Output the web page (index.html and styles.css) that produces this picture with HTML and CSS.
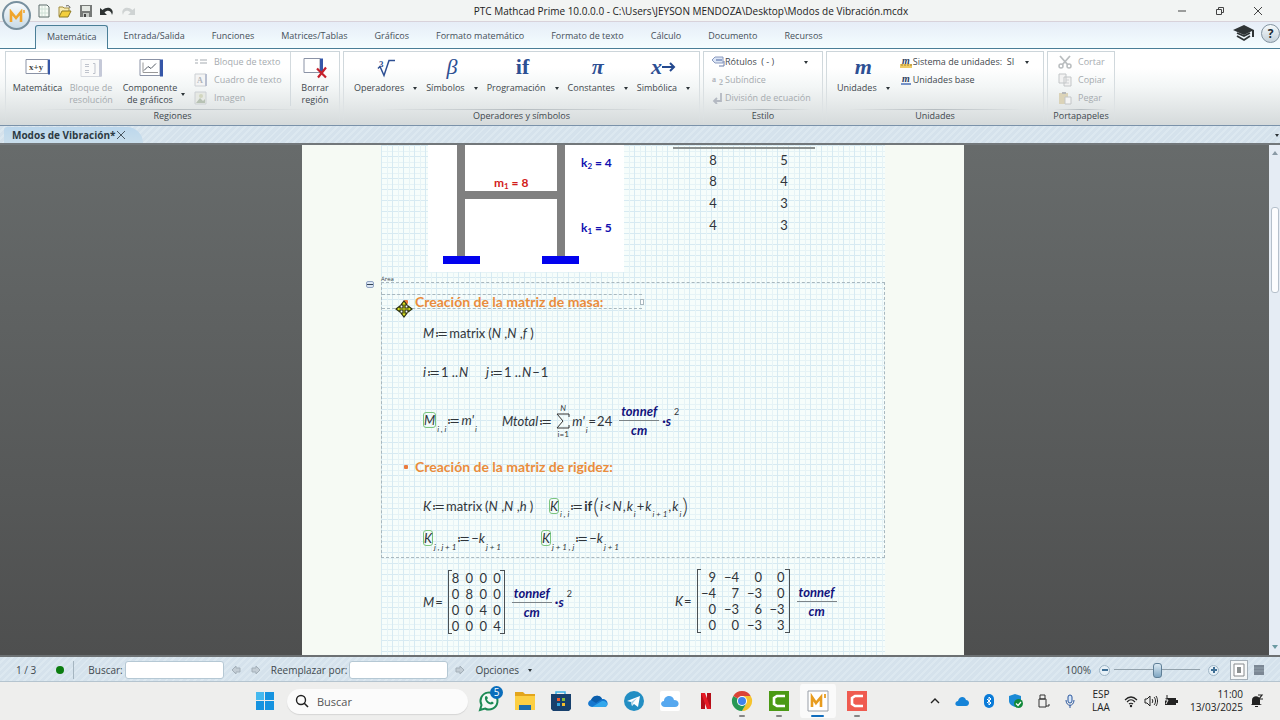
FILE: index.html
```html
<!DOCTYPE html>
<html lang="es">
<head>
  <meta charset="UTF-8" />
  <meta name="viewport" content="width=device-width, initial-scale=1" />
  <title>PTC Mathcad Prime 10.0.0.0</title>
  <link rel="stylesheet" href="styles.css">
</head>
<body>
  <header class="titlebar">
    <button class="orb" aria-label="Menú de Mathcad">
      <svg viewBox="0 0 18 14" width="18" height="14"><path d="M3 13V3l5 6 5-6v10" fill="none" stroke="#f0a52c" stroke-width="2.6"/><path d="M16 1v3" stroke="#f0a52c" stroke-width="1.6"/></svg>
    </button>
    <div class="quick">
      <button aria-label="Nuevo"><svg viewBox="0 0 14 14" width="14" height="14"><path d="M2 1h8l2 2v10H2z" fill="#f7fbf6" stroke="#5c6c6a"/><path d="M5 2v10M8 2v10M3 5h8M3 9h8" stroke="#cfe0d6"/></svg></button>
      <button aria-label="Abrir"><svg viewBox="0 0 14 14" width="14" height="14"><path d="M1 12V3h4l1 1h5v3" fill="#f8ecb0" stroke="#a18b3c"/><path d="M1 13l3-6h9l-3 6z" fill="#f3cf3d" stroke="#8d7a24"/><path d="M8 2c2-1 4 0 4 2" fill="none" stroke="#555"/></svg></button>
      <button aria-label="Guardar"><svg viewBox="0 0 14 14" width="14" height="14"><path d="M1 1h12v12H1z" fill="#777a78"/><path d="M3 2h8v5H3z" fill="#e4e8e3"/><path d="M4 9h6v4H4z" fill="#c5c9c5"/><path d="M5 10h2v3H5z" fill="#444"/></svg></button>
      <button aria-label="Deshacer"><svg viewBox="0 0 14 14" width="14" height="14"><path d="M0 4v7h7L4.500 8.500C7 6 11 6 12 11c3-6-4-10-9.500-5z" fill="#2d3232"/></svg></button>
      <button aria-label="Rehacer"><svg viewBox="0 0 14 14" width="14" height="14"><path d="M14 4v7H7l2.500-2.500C7 6 3 6 2 11c-3-6 4-10 9.500-5z" fill="#cfd3d3"/></svg></button>
    </div>
    <h1 class="title">PTC Mathcad Prime 10.0.0.0 - C:\Users\JEYSON MENDOZA\Desktop\Modos de Vibración.mcdx</h1>
    <div class="window-buttons">
      <button aria-label="Minimizar"><svg viewBox="0 0 10 10" width="10" height="10"><path d="M1 5h8"/></svg></button>
      <button aria-label="Restaurar"><svg viewBox="0 0 10 10" width="10" height="10"><path d="M1.500 3.500h5v5h-5zM3.500 3V1.500h5v5H7"/></svg></button>
      <button aria-label="Cerrar"><svg viewBox="0 0 10 10" width="10" height="10"><path d="M1 1l8 8M9 1L1 9"/></svg></button>
    </div>
  </header>

  <nav class="tabs">
    <a class="tab active" href="#">Matemática</a>
    <a class="tab" href="#">Entrada/Salida</a>
    <a class="tab" href="#">Funciones</a>
    <a class="tab" href="#">Matrices/Tablas</a>
    <a class="tab" href="#">Gráficos</a>
    <a class="tab" href="#">Formato matemático</a>
    <a class="tab" href="#">Formato de texto</a>
    <a class="tab" href="#">Cálculo</a>
    <a class="tab" href="#">Documento</a>
    <a class="tab" href="#">Recursos</a>
    <div class="tabs-right">
      <button aria-label="Aprendizaje"><svg viewBox="0 0 22 18" width="22" height="18"><path d="M11 1L0 6l11 5 8-4v6h2V6z" fill="#2f3436"/><path d="M4 9l7 3 6-3M4 12l7 4 6-4" fill="none" stroke="#2f3436" stroke-width="1.800"/></svg></button>
      <button class="help" aria-label="Ayuda">?</button>
    </div>
  </nav>

  <section class="ribbon">
    <div class="group group-regions">
      <div class="group-body">
        <button class="big w64">
          <svg class="icon" viewBox="0 0 26 20" width="26" height="20"><path d="M1 1h22v14H1z" fill="#fff" stroke="#8b93a6"/><path d="M23 1h2v15h-2z" fill="#3556a8"/><text x="4" y="11" class="icon-text">x+y</text></svg>
          <span>Matemática</span>
        </button>
        <button class="big w44 off">
          <svg class="icon" viewBox="0 0 26 20" width="26" height="20"><path d="M3 1h20v17H3z" fill="#fafafa" stroke="#d5d8de"/><path d="M21 1h3v17h-3z" fill="#c5c9d8"/><path d="M7 6h4M7 8h4M7 12h4M7 14h4M15 5h2v10h-2" stroke="#bfc3cc" fill="none"/></svg>
          <span>Bloque de<br>resolución</span>
        </button>
        <button class="big w75">
          <svg class="icon" viewBox="0 0 26 20" width="26" height="20"><path d="M2 1h20v16H2z" fill="#fff" stroke="#8b93a6"/><path d="M22 1h3v17H22z" fill="#3556a8"/><path d="M5 4v10h15" fill="none" stroke="#999"/><path d="M6 12l4-4 3 2 5-5" fill="none" stroke="#555c66"/></svg>
          <span class="with-caret"><span>Componente<br>de gráficos</span><i class="caret"></i></span>
        </button>
        <div class="small-list list-regions">
          <button class="small off"><svg viewBox="0 0 14 14" width="14" height="14"><path d="M1 5h3M6 5h7M1 8h3M6 8h7" stroke="#c4c8cc" stroke-width="1.500"/></svg>Bloque de texto</button>
          <button class="small off"><svg viewBox="0 0 14 14" width="14" height="14"><path d="M1 1h11v12H1z" fill="#f4f4f4" stroke="#ccd0d4"/><path d="M12 1v12" stroke="#b8bfd0" stroke-width="2"/><text x="3" y="10" class="icon-off">A</text></svg>Cuadro de texto</button>
          <button class="small off"><svg viewBox="0 0 14 14" width="14" height="14"><path d="M1 1h11v12H1z" fill="#e6e9e4" stroke="#ccd0d4"/><path d="M2 12l4-5 3 3 2-2v4z" fill="#b7c2b4"/><circle cx="7" cy="5" r="2" fill="#d2d6bf"/></svg>Imagen</button>
        </div>
        <button class="big w50 divided">
          <svg class="icon" viewBox="0 0 26 22" width="26" height="22"><path d="M2 1h16v14H2z" fill="#fff" stroke="#8b93a6"/><path d="M18 1h3v14h-3z" fill="#3556a8"/><path d="M15 11l9 9M24 10l-8 10" stroke="#c5202c" stroke-width="2.200"/></svg>
          <span>Borrar<br>región</span>
        </button>
      </div>
      <h2>Regiones</h2>
    </div>

    <div class="group group-operators">
      <div class="group-body spaced">
        <button class="big"><svg class="icon" viewBox="0 0 22 20" width="22" height="20"><path d="M3 10l2-2 4 9L14 2h6" fill="none" stroke="#2d4f93" stroke-width="1.500"/><text x="4" y="8" class="root-index">3</text></svg><span class="with-caret">Operadores<i class="caret"></i></span></button>
        <button class="big"><b class="glyph light">β</b><span class="with-caret">Símbolos<i class="caret"></i></span></button>
        <button class="big"><b class="glyph">if</b><span class="with-caret">Programación<i class="caret"></i></span></button>
        <button class="big"><b class="glyph italic">π</b><span class="with-caret">Constantes<i class="caret"></i></span></button>
        <button class="big"><b class="glyph"><em>x</em><svg viewBox="0 0 14 10" width="14" height="10"><path d="M0 5h11M8 1l4 4-4 4" fill="none" stroke="#24498f" stroke-width="2"/></svg></b><span class="with-caret">Simbólica<i class="caret"></i></span></button>
      </div>
      <h2>Operadores y símbolos</h2>
    </div>

    <div class="group group-style">
      <div class="group-body">
        <div class="small-list">
          <button class="small tight"><svg viewBox="0 0 14 12" width="14" height="12"><path d="M1 4l3-3h8v6H4z" fill="#dbe5f5" stroke="#8a9abf"/><path d="M5 4h6" stroke="#4a63a0"/><path d="M13 5v5H8" fill="none" stroke="#6b7da8"/></svg>Rótulos&nbsp; ( - )<i class="caret end"></i></button>
          <button class="small tight off"><svg viewBox="0 0 14 12" width="14" height="12"><text x="1" y="8" class="icon-off">a</text><text x="8" y="11" class="icon-off">2</text></svg>Subíndice</button>
          <button class="small tight off"><svg viewBox="0 0 14 12" width="14" height="12"><path d="M10 1v8H3M6 6L3 9l3 3" fill="none" stroke="#b4b9c2" stroke-width="1.800"/></svg>División de ecuación</button>
        </div>
      </div>
      <h2>Estilo</h2>
    </div>

    <div class="group group-units">
      <div class="group-body spaced">
        <button class="big"><b class="glyph italic">m</b><span class="with-caret">Unidades<i class="caret"></i></span></button>
        <div class="small-list">
          <button class="small tight"><svg viewBox="0 0 14 16" width="14" height="16"><path d="M1 10h12v4H1z" fill="#efcb65"/><path d="M3 10v2M6 10v2M9 10v2M12 10v2" stroke="#a5822c"/><text x="3" y="10" class="icon-m">m</text></svg>Sistema de unidades:&nbsp; SI<i class="caret end"></i></button>
          <button class="small tight"><svg viewBox="0 0 14 16" width="14" height="16"><path d="M2 12h10" stroke="#4b72b8" stroke-width="1.500"/><text x="3" y="10" class="icon-m">m</text></svg>Unidades base</button>
        </div>
      </div>
      <h2>Unidades</h2>
    </div>

    <div class="group group-clipboard">
      <div class="group-body">
        <div class="small-list">
          <button class="small off"><svg viewBox="0 0 14 14" width="14" height="14"><path d="M2 1l8 9M12 1L4 10" stroke="#b9bdbf" stroke-width="1.800"/><circle cx="3" cy="11" r="2" fill="none" stroke="#b9bdbf" stroke-width="1.500"/><circle cx="11" cy="11" r="2" fill="none" stroke="#b9bdbf" stroke-width="1.500"/></svg>Cortar</button>
          <button class="small off"><svg viewBox="0 0 14 14" width="14" height="14"><path d="M1 1h7v9H1zM6 4h7v9H6z" fill="#f2f2f2" stroke="#c3c6c8"/><path d="M8 7h3M8 10h3" stroke="#cfd2d4"/></svg>Copiar</button>
          <button class="small off"><svg viewBox="0 0 14 14" width="14" height="14"><path d="M1 2h9v11H1z" fill="#dbd3b8"/><path d="M4 1h4v2H4z" fill="#b5b7b9"/><path d="M7 6h6v7H7z" fill="#f4f4f4" stroke="#c3c6c8"/></svg>Pegar</button>
        </div>
      </div>
      <h2>Portapapeles</h2>
    </div>
  </section>

  <div class="doc-tabs stripes">
    <div class="doc-tab">Modos de Vibración* <button aria-label="Cerrar documento"><svg viewBox="0 0 8 8" width="8" height="8"><path d="M0 0l8 8M8 0L0 8" stroke="#4a5660"/></svg></button></div>
    <i class="caret"></i>
  </div>

  <main class="workspace">
    <div class="desk">
      <article class="page">
        <div class="sheet">
          <svg class="region frame" viewBox="0 0 196 127" width="196" height="127">
            <path d="M0 0h196v127H0z" fill="#fff"/>
            <path d="M29 0h8v111h-8zM129 0h8v111h-8zM37 46h92v8H37z" fill="#808080"/>
            <path d="M15 111h37v8H15zM114 111h37v8h-37z" fill="#0202ee"/>
            <text x="66" y="42" class="mass">m<tspan class="idx" dy="2">1</tspan><tspan dy="-2"> = 8</tspan></text>
            <text x="153" y="22" class="spring">k<tspan class="idx" dy="2">2</tspan><tspan dy="-2"> = 4</tspan></text>
            <text x="153" y="87" class="spring">k<tspan class="idx" dy="2">1</tspan><tspan dy="-2"> = 5</tspan></text>
          </svg>

          <table class="region values">
            <tr><td>8</td><td>5</td></tr>
            <tr><td>8</td><td>4</td></tr>
            <tr><td>4</td><td>3</td></tr>
            <tr><td>4</td><td>3</td></tr>
          </table>

          <button class="collapse" aria-label="Contraer área"></button>
          <span class="area-label">Área</span>

          <section class="area">
            <div class="text-region">
              <h3 class="heading">Creación de la matriz de masa:</h3>
              <i class="handle"></i>
            </div>
            <div class="region math mass-def"><var>M</var><span>≔</span><span>matrix</span><span class="arg">(<var>N</var> ,<var>N</var> ,<var>f</var> )</span></div>
            <div class="region math i-range"><var>i</var><span>≔</span><span>1 ..</span><var>N</var></div>
            <div class="region math j-range"><var>j</var><span>≔</span><span>1 ..</span><var>N</var><span>−</span><span>1</span></div>
            <div class="region math m-assign"><var class="boxed">M</var><var class="low">i , i</var><span>≔</span><var>m'</var><var class="low">i</var></div>
            <div class="region math m-total">
              <var>Mtotal</var><span>≔</span>
              <span class="sum"><small><var>N</var></small><svg viewBox="0 0 14 16" width="14" height="16"><path d="M13 4V1H1l6 7-6 7h12v-3" fill="none" stroke="#333" /></svg><small>i=1</small></span>
              <var>m'</var><var class="low">i</var><span>=</span><span>24</span>
              <span class="fraction"><span>tonnef</span><span>cm</span></span><b class="unit">·s</b><span class="high">2</span>
            </div>
            <h3 class="region heading heading-k">Creación de la matriz de rigidez:</h3>
            <div class="region math k-def"><var>K</var><span>≔</span><span>matrix</span><span class="arg">(<var>N</var> ,<var>N</var> ,<var>h</var> )</span></div>
            <div class="region math k-diag"><var class="boxed">K</var><var class="low">i , i</var><span>≔</span><b>if</b><span class="paren">(</span><var>i</var><span>&lt;</span><var>N</var><span>,</span><var>k</var><var class="low">i</var><span>+</span><var>k</var><var class="low">i + 1</var><span>,</span><var>k</var><var class="low">i</var><span class="paren">)</span></div>
            <div class="region math k-upper"><var class="boxed">K</var><var class="low">j , j + 1</var><span>≔</span><span>−<var>k</var></span><var class="low">j + 1</var></div>
            <div class="region math k-lower"><var class="boxed">K</var><var class="low">j + 1 , j</var><span>≔</span><span>−<var>k</var></span><var class="low">j + 1</var></div>
          </section>

          <div class="region math m-result">
            <var>M</var><span>=</span>
            <table class="matrix">
              <tr><td>8</td><td>0</td><td>0</td><td>0</td></tr>
              <tr><td>0</td><td>8</td><td>0</td><td>0</td></tr>
              <tr><td>0</td><td>0</td><td>4</td><td>0</td></tr>
              <tr><td>0</td><td>0</td><td>0</td><td>4</td></tr>
            </table>
            <span class="fraction"><span>tonnef</span><span>cm</span></span><b class="unit">·s</b><span class="high">2</span>
          </div>
          <div class="region math k-result">
            <var>K</var><span>=</span>
            <table class="matrix wide">
              <tr><td>9</td><td>−4</td><td>0</td><td>0</td></tr>
              <tr><td>−4</td><td>7</td><td>−3</td><td>0</td></tr>
              <tr><td>0</td><td>−3</td><td>6</td><td>−3</td></tr>
              <tr><td>0</td><td>0</td><td>−3</td><td>3</td></tr>
            </table>
            <span class="fraction"><span>tonnef</span><span>cm</span></span>
          </div>

          <svg class="cursor" viewBox="0 0 18 18" width="18" height="18"><path d="M9 1l3 4h-2v3h3V6l4 3-4 3v-2h-3v3h2l-3 4-3-4h2v-3H5v2L1 9l4-3v2h3V5H6z" fill="#dbe61f" stroke="#2c3010" stroke-width="1.200"/></svg>
        </div>
      </article>
    </div>
    <div class="scrollbar"><i class="up"></i><i class="thumb"></i><i class="down"></i></div>
  </main>

  <footer class="status stripes">
    <span class="pages">1 / 3</span>
    <i class="dot"></i>
    <label class="find" for="find">Buscar:</label>
    <input id="find" type="text">
    <button class="arrow" aria-label="Anterior"><svg viewBox="0 0 10 10" width="10" height="10"><path d="M1 5l4-4v2h4v4H5v2z"/></svg></button>
    <button class="arrow" aria-label="Siguiente"><svg viewBox="0 0 10 10" width="10" height="10"><path d="M9 5L5 1v2H1v4h4v2z"/></svg></button>
    <label for="replace">Reemplazar por:</label>
    <input id="replace" type="text">
    <button class="arrow" aria-label="Reemplazar"><svg viewBox="0 0 10 10" width="10" height="10"><path d="M9 5L5 1v2H1v4h4v2z"/></svg></button>
    <button class="options">Opciones<i class="caret"></i></button>
    <div class="zoom">
      <label for="zoom">100%</label>
      <button class="round" aria-label="Reducir"><svg viewBox="0 0 6 6" width="6" height="6"><path d="M0 3h6"/></svg></button>
      <input id="zoom" type="range" min="0" max="200" value="100">
      <button class="round" aria-label="Ampliar"><svg viewBox="0 0 6 6" width="6" height="6"><path d="M0 3h6M3 0v6"/></svg></button>
      <button class="view current" aria-label="Vista de página"><svg viewBox="0 0 12 14" width="12" height="14"><path d="M1 1h10v12H1z" fill="#fff" stroke="#868a8c"/><path d="M4 4h4v6H4z" fill="#8b9090"/></svg></button>
      <button class="view" aria-label="Vista de borrador"><svg viewBox="0 0 10 12" width="10" height="12"><path d="M0 1h10v10H0z" fill="#7b8794"/><path d="M0 4h10M0 7h10" stroke="#93a0ab"/></svg></button>
    </div>
  </footer>

  <footer class="taskbar">
    <div class="start-area">
      <button class="start" aria-label="Inicio"><svg viewBox="0 0 20 20" width="20" height="20"><path d="M1 1h8v8H1zM10 1h9v8h-9zM1 10h8v9H1zM10 10h9v9h-9z" fill="#1593e0"/><path d="M1 1h8v8H1z" fill="#45b9ef"/></svg></button>
      <label class="search"><svg viewBox="0 0 14 14" width="14" height="14"><circle cx="6" cy="6" r="4.500" fill="none" stroke="#222" stroke-width="1.400"/><path d="M9 9l4 4" stroke="#222" stroke-width="1.600"/></svg><input type="text" placeholder="Buscar" aria-label="Buscar"></label>
      <div class="apps">
        <button aria-label="WhatsApp"><svg viewBox="0 0 22 22" width="22" height="22"><path d="M2 20l1.500-5a8.500 8.500 0 1 1 3.500 3.500z" fill="#f4f8f5" stroke="#1c8a54" stroke-width="2"/><path d="M7 7c1-2 2-1 3 1l-1 1.500c1 2 2 2.500 3.500 3l1.500-1c2 1 2 2 1 2.500-4 2-9-3-8-7z" fill="#1c8a54"/></svg><span class="badge">5</span></button>
        <button aria-label="Explorador"><svg viewBox="0 0 22 22" width="22" height="22"><path d="M1 2h8l2 2h10v16H1z" fill="#e3a51c"/><path d="M1 6h20v14H1z" fill="#fccf43"/><path d="M5 15h12v5H5z" fill="#1b6dad"/></svg></button>
        <button aria-label="Microsoft Store"><svg viewBox="0 0 22 22" width="22" height="22"><path d="M6 5V2h9v3" fill="none" stroke="#3cb2e6" stroke-width="1.500"/><path d="M1 4h20v15l-2 2H3l-2-2z" fill="#17406d"/><path d="M7 8h3v3H7z" fill="#ef5b31"/><path d="M12 8h3v3h-3z" fill="#85b93a"/><path d="M7 13h3v3H7z" fill="#32a5e0"/><path d="M12 13h3v3h-3z" fill="#f5bd2d"/></svg></button>
        <button aria-label="OneDrive"><svg viewBox="0 0 22 22" width="22" height="22"><path d="M5 17c-5 0-5-6-1-7 2-5 9-6 11-1 6-1 8 8 2 8z" fill="#1577cf"/><path d="M4 10c2-5 9-6 11-1L9 13z" fill="#0c5eab"/><path d="M5 17l10-6c6-1 7 6 2 6z" fill="#32a7ec"/></svg></button>
        <button aria-label="Telegram"><svg viewBox="0 0 22 22" width="22" height="22"><circle cx="11" cy="11" r="10" fill="#238ec3"/><path d="M4 11l13-5-2 11-4-3-2 2-1-4z" fill="#fff"/><path d="M8 12l6-4-4 5-1 3z" fill="#a8cfe4"/></svg></button>
        <button aria-label="iCloud"><svg viewBox="0 0 22 22" width="22" height="22"><rect x="1" y="1" width="20" height="20" rx="2" fill="#fff"/><path d="M6 17c-5 0-5-6-1-6 0-6 9-7 10-1 6 0 6 7 1 7z" fill="#56a8ef"/></svg></button>
        <button aria-label="Netflix"><svg viewBox="0 0 22 22" width="22" height="22"><path d="M6 3h4v16H6zM12 3h4v16h-4z" fill="#b40e18"/><path d="M6 3h4l6 16h-4z" fill="#e51a25"/></svg></button>
        <button class="running" aria-label="Chrome"><svg viewBox="0 0 22 22" width="22" height="22"><path d="M11 11V6h8.700A10 10 0 0 1 11 21l4.300-7.500z" fill="#f6c32c"/><path d="M11 11l4.300 2.500L11 21A10 10 0 0 1 2.300 6z" fill="#279854"/><path d="M11 11L2.300 6A10 10 0 0 1 19.700 6H11z" fill="#db4437"/><circle cx="11" cy="11" r="5" fill="#fff"/><circle cx="11" cy="11" r="4" fill="#4084ec"/></svg></button>
        <button class="running" aria-label="Camtasia"><svg viewBox="0 0 22 22" width="22" height="22"><path d="M1 1h20v20H1z" fill="#4b9a14"/><path d="M17 6H9L6 8v6l3 2h8" fill="none" stroke="#fff" stroke-width="2.600"/></svg></button>
        <button class="running front" aria-label="Mathcad"><svg viewBox="0 0 22 22" width="22" height="22"><path d="M1 1h20v20H1z" fill="#fff" stroke="#999fa8"/><path d="M5 17V7l4 6 5-6v10" fill="none" stroke="#e89c1e" stroke-width="2.600"/><path d="M18 4v4" stroke="#e89c1e" stroke-width="1.800"/></svg></button>
        <button class="running" aria-label="Grabadora de Camtasia"><svg viewBox="0 0 22 22" width="22" height="22"><path d="M1 1h20v20H1z" fill="#ef5b50"/><path d="M17 6H9L6 8v6l3 2h8" fill="none" stroke="#fff" stroke-width="2.600"/></svg></button>
      </div>
    </div>
    <div class="tray">
      <svg viewBox="0 0 14 14" width="14" height="14"><path d="M3 9l4-4 4 4" fill="none" stroke="#222" stroke-width="1.400"/></svg>
      <svg viewBox="0 0 14 14" width="14" height="14"><path d="M3 12c-4 0-3-5 0-5 1-5 7-5 8-1 4 0 4 6 0 6z" fill="#1583d8"/></svg>
      <svg viewBox="0 0 14 14" width="14" height="14"><rect x="2" y="0" width="10" height="14" rx="5" fill="#0a7bd8"/><path d="M5 5l4 4-2 2V3l2 2-4 4" fill="none" stroke="#fff"/></svg>
      <svg viewBox="0 0 14 14" width="14" height="14"><path d="M6 0l6 2v5c0 3-3 5-6 6-3-1-6-3-6-6V2z" fill="#1b8ad6"/><circle cx="9.500" cy="9.500" r="4.500" fill="#12893a"/><path d="M7 9.500l2 2 3-3.500" fill="none" stroke="#fff" stroke-width="1.200"/></svg>
      <svg viewBox="0 0 14 14" width="14" height="14"><path d="M4 1h5v4H4zM3 5h7v8H3zM10 12h3v-2" fill="none" stroke="#333"/></svg>
      <svg viewBox="0 0 14 14" width="14" height="14"><rect x="5" y="1" width="4" height="8" rx="2" fill="#d6e6f8" stroke="#29559d"/><path d="M3 6c0 7 8 7 8 0M7 11v3" fill="none" stroke="#29559d"/></svg>
      <span class="lang">ESP<br>LAA</span>
      <span class="net">
        <svg viewBox="0 0 14 14" width="14" height="14"><path d="M1 6c4-4 8-4 12 0M3 8c3-3 5-3 8 0M5 10c1-1 3-1 4 0" fill="none" stroke="#222" stroke-width="1.200"/><circle cx="7" cy="12" r="1.200" fill="#222"/></svg>
        <svg viewBox="0 0 14 14" width="14" height="14"><path d="M1 5h2l3-3v10L3 9H1zM8 5c1 1 1 3 0 4M10 3c2 2 2 6 0 8M12 2c2 3 2 7 0 10" fill="none" stroke="#222"/></svg>
        <svg viewBox="0 0 14 14" width="14" height="14"><path d="M1 4h11v7H1zM12 6h2v3h-2z" fill="#222"/><path d="M4 1L1 6h3L2 10" fill="none" stroke="#eee"/><path d="M3 1v4" stroke="#222"/></svg>
      </span>
      <time class="clock">11:00<br>13/03/2025</time>
      <svg viewBox="0 0 14 14" width="14" height="14"><path d="M2 10V6c0-5 8-5 8 0v4l2 1H1zM5 12h3v1H5z" fill="#222"/><path d="M8 1h4L9 5h4" fill="none" stroke="#222" stroke-width="1.200"/></svg>
    </div>
  </footer>
</body>
</html>
```
FILE: styles.css
```css
* {
  box-sizing: border-box;
}

body {
  margin: 0;
  height: 100vh;
  display: flex;
  flex-direction: column;
  overflow: hidden;
  position: relative;
  font-family: "Open Sans", "Noto Sans", sans-serif;
  font-size: 9px;
  line-height: 12px;
  color: #3f484e;
  background: #eeeeed;
}

button {
  margin: 0;
  padding: 0;
  border: 0;
  background: none;
  font: inherit;
  color: inherit;
}

svg {
  display: block;
  flex-shrink: 0;
}

h1, h2, h3 {
  margin: 0;
  font-size: inherit;
  font-weight: 400;
}

.caret {
  width: 0;
  height: 0;
  border: 2px solid transparent;
  border-top: 3px solid #2d3438;
  border-bottom: 0;
}

.stripes {
  background: repeating-linear-gradient(135deg, #d5e2ec 0 3px, #dce8f0 3px 5px);
}

/* title bar */

.titlebar {
  height: 22px;
  display: flex;
  align-items: center;
  background: #f2f4f3;
  border-bottom: 1px solid #d8d2da;
}

.orb {
  position: absolute;
  left: 2px;
  top: 1px;
  z-index: 2;
  width: 29px;
  height: 29px;
  padding-left: 4px;
  border: 2px solid #78909f;
  border-radius: 50%;
  background: linear-gradient(#f7fafc, #c9dbe7);
}

.quick {
  display: flex;
  gap: 7px;
  padding-left: 37px;
}

.title {
  flex: 1;
  padding-left: 70px;
  text-align: center;
  font-size: 10px;
  color: #222;
}

.window-buttons {
  display: flex;
  justify-content: flex-end;
  gap: 28px;
  padding-right: 17px;
}

.window-buttons path {
  fill: none;
  stroke: #444;
}

/* ribbon tabs */

.tabs {
  height: 27px;
  display: flex;
  align-items: flex-end;
  gap: 3px;
  padding-left: 35px;
  background: linear-gradient(#e6edf7, #f4fdff);
  border-bottom: 1px solid #4a7e97;
}

.tab {
  height: 24px;
  padding: 0 11px;
  border: 1px solid transparent;
  border-bottom: 0;
  line-height: 21px;
  color: #46505a;
  text-decoration: none;
}

.tab.active {
  margin-bottom: -1px;
  border-color: #4a7e97;
  border-radius: 3px 3px 0 0;
  background: linear-gradient(#d3e4ef, #f8fdff);
}

.tabs-right {
  margin-left: auto;
  display: flex;
  align-items: center;
  gap: 6px;
  height: 26px;
  padding-bottom: 4px;
}

.help {
  width: 19px;
  height: 19px;
  border: 1px solid #8293a0;
  border-radius: 50%;
  background: linear-gradient(#f5f9fb, #c4d1da);
  font-size: 12px;
  font-weight: 700;
  line-height: 17px;
  color: #222b33;
}

/* ribbon */

.ribbon {
  height: 77px;
  display: flex;
  gap: 3px;
  padding: 2px 5px 0;
  background: linear-gradient(#fff 25%, #f3f6f6 50%, #d5dadb);
  border-bottom: 1px solid #7a92aa;
}

.group {
  display: flex;
  flex-direction: column;
  height: 73px;
  border: 1px solid;
  border-image: linear-gradient(#ccd5da, #dde2e4 70%, transparent) 1;
  border-bottom: 0;
}

.group-regions { width: 335px; }
.group-operators { width: 357px; }
.group-style { width: 120px; }
.group-units { width: 218px; }
.group-clipboard { width: 68px; }

.group-body {
  flex: 1;
  display: flex;
  align-items: flex-start;
}

.group-body.spaced {
  gap: 9px;
  padding-left: 10px;
}

.group h2 {
  height: 15px;
  text-align: center;
  border-top: 1px solid;
  border-image: linear-gradient(90deg, transparent 10%, #b5bcc0 50%, transparent 90%) 1;
}

.big {
  display: flex;
  flex-direction: column;
  align-items: center;
  padding-top: 5px;
  white-space: nowrap;
}

.big .icon {
  height: 25px;
  padding-bottom: 2px;
}

.w64 { width: 63px; }
.w44 { width: 44px; }
.w75 { width: 75px; }
.w50 { width: 49px; }

.divided {
  border-left: 1px solid #d3dade;
}

.off {
  color: #a6abaf;
}

.with-caret {
  display: flex;
  align-items: center;
  gap: 9px;
}

.w75 .with-caret {
  gap: 4px;
  margin-left: 7px;
}

.glyph {
  display: flex;
  align-items: center;
  height: 25px;
  padding-bottom: 6px;
  font-family: "Liberation Serif", serif;
  font-size: 22px;
  font-weight: 700;
  color: #2d4f93;
}

.glyph.italic {
  font-style: italic;
}

.glyph.light {
  font-style: italic;
  font-weight: 400;
}

.icon-text {
  font: 700 9px "Liberation Serif", serif;
  fill: #444;
}

.root-index {
  font: 700 9px "Liberation Serif", serif;
  fill: #2d4f93;
}

.icon-off {
  font: 700 8px "Liberation Serif", serif;
  fill: #b0b5bb;
}

.icon-m {
  font: italic 700 10px "Liberation Serif", serif;
  fill: #2d4060;
}

.small-list {
  flex: 1;
  padding-top: 1px;
}

.list-regions {
  padding-left: 6px;
}

.small {
  display: flex;
  align-items: center;
  gap: 6px;
  width: 100%;
  height: 18px;
  white-space: nowrap;
}

.small.tight {
  gap: 0;
}

.small .end {
  margin-left: auto;
  margin-right: 14px;
}

.group-style .small-list {
  padding-left: 7px;
}

.group-clipboard .small-list {
  padding-left: 10px;
}

/* document tabs */

.doc-tabs {
  height: 19px;
  display: flex;
  align-items: center;
  justify-content: space-between;
  padding: 1px 1px 0 4px;
  border-bottom: 2px solid #72777a;
}

.doc-tab {
  display: flex;
  align-items: center;
  gap: 2px;
  height: 16px;
  padding: 0 18px 0 8px;
  font-size: 10px;
  font-weight: 700;
  color: #2d3a44;
  background: linear-gradient(#bcd7ec, #c9deec);
  border-radius: 4px 20px 0 0;
}

/* worksheet */

.workspace {
  flex: 1;
  min-height: 0;
  display: flex;
}

.desk {
  flex: 1;
  display: flex;
  justify-content: center;
  padding-right: 3px;
  overflow: hidden;
  background: linear-gradient(#676b6b, #4e4f4f);
}

.page {
  width: 662px;
  padding: 0 79px;
  background: #f6faf4;
}

.sheet {
  position: relative;
  height: 100%;
  background-color: #f6fdfb;
  background-image:
    linear-gradient(90deg, #d7eaf2 1px, transparent 1px, transparent 6px, #e6f3f6 6px, #e6f3f6 7px, transparent 7px),
    linear-gradient(#d7eaf2 1px, transparent 1px, transparent 6px, #e6f3f6 6px, #e6f3f6 7px, transparent 7px);
  background-size: 11px 11px;
}

.region {
  position: absolute;
}

.math, .values {
  font-family: Lato, sans-serif;
  font-size: 13px;
  line-height: 16px;
  color: #30353a;
}

.math {
  display: flex;
  align-items: center;
  gap: 1px;
  white-space: nowrap;
}

.frame {
  left: 47px;
  top: 0;
}

.mass, .spring {
  font: 700 12px Lato, sans-serif;
  fill: #d21b1b;
}

.spring {
  fill: #1010b0;
}

.idx {
  font-size: 8px;
}

.values {
  left: 292px;
  top: 2px;
  border-top: 2px solid #8b9190;
  border-collapse: collapse;
}

.values td {
  width: 71px;
  height: 22px;
  padding: 0 0 0 9px;
  text-align: center;
}

.collapse {
  position: absolute;
  left: -15px;
  top: 136px;
  width: 8px;
  height: 7px;
  border: 1px solid #93a5c4;
  border-radius: 2px;
  background: linear-gradient(#dce6f4 2px, #345 2px, #345 3px, #dce6f4 3px);
}

.area-label {
  position: absolute;
  left: 0;
  top: 130px;
  font-size: 6px;
  line-height: 8px;
}

.area {
  position: absolute;
  left: 0;
  top: 137px;
  width: 504px;
  height: 276px;
  border: 1px dashed #a9b8bf;
}

.text-region {
  position: absolute;
  left: 0;
  top: 11px;
  display: flex;
  align-items: center;
  width: 260px;
  height: 15px;
  padding-left: 22px;
  border: 1px dashed #a9b8bf;
  border-width: 1px 0;
}

.handle {
  width: 4px;
  height: 6px;
  margin-left: auto;
  margin-right: -2px;
  border: 1px solid #a9b8bf;
  background: #fff;
}

.heading {
  display: flex;
  align-items: center;
  font-family: Lato, sans-serif;
  font-size: 14px;
  line-height: 14px;
  font-weight: 700;
  color: #ea8c3c;
  white-space: nowrap;
}

.heading::before {
  content: "";
  width: 4px;
  height: 4px;
  margin-right: 7px;
  border-radius: 1px;
  background: #ea7a3c;
}

.mass-def { left: 41px; top: 42px; }
.i-range { left: 41px; top: 81px; }
.j-range { left: 104px; top: 81px; }
.m-assign { left: 41px; top: 129px; }
.m-total { left: 120px; top: 119px; }
.heading-k { left: 22px; top: 177px; }
.k-def { left: 41px; top: 215px; }
.k-diag { left: 167px; top: 211px; }
.k-upper { left: 41px; top: 247px; }
.k-lower { left: 159px; top: 247px; }
.m-result { left: 42px; top: 425px; }
.k-result { left: 294px; top: 424px; }

.arg {
  margin-left: 2px;
}

.boxed {
  border: 1px solid #7cc57f;
  border-radius: 3px;
  line-height: 14px;
}

.low {
  align-self: flex-end;
  margin-bottom: -6px;
  font-size: 8px;
  line-height: 10px;
}

.high {
  align-self: flex-start;
  margin-top: 18px;
  font-size: 9px;
  line-height: 12px;
}

.m-total .high {
  margin-top: 4px;
}

.m-total .low {
  margin-bottom: 4px;
}

.k-diag .low {
  margin-bottom: -1px;
}

.paren {
  font-size: 22px;
  font-weight: 300;
  line-height: 24px;
}

.sum {
  display: flex;
  flex-direction: column;
  align-items: center;
  margin: 0 1px 0 3px;
}

.sum small {
  font-size: 8px;
  line-height: 10px;
}

.fraction {
  display: flex;
  flex-direction: column;
  margin-left: 6px;
  text-align: center;
}

.fraction span {
  padding: 1px 2px;
  font-weight: 700;
  font-style: italic;
  color: #12127c;
}

.fraction span:first-child {
  border-bottom: 1px solid #7c8488;
}

.unit {
  margin: 0 2px;
  font-style: italic;
  color: #12127c;
}

.matrix {
  margin-left: 4px;
  border-collapse: collapse;
  border: 1px solid #4a5054;
  border-width: 0 1px;
  background:
    linear-gradient(#4a5054, #4a5054) 0 0 / 4px 1px no-repeat,
    linear-gradient(#4a5054, #4a5054) 100% 0 / 4px 1px no-repeat,
    linear-gradient(#4a5054, #4a5054) 0 100% / 4px 1px no-repeat,
    linear-gradient(#4a5054, #4a5054) 100% 100% / 4px 1px no-repeat;
}

.matrix td {
  padding: 0;
  width: 14px;
  height: 16px;
  text-align: center;
}

.matrix.wide td {
  width: 23px;
  padding-right: 4px;
  text-align: right;
}

.cursor {
  position: absolute;
  left: 14px;
  top: 155px;
}

.scrollbar {
  width: 11px;
  display: flex;
  flex-direction: column;
  align-items: center;
  padding: 6px 0;
  background: #e5ecf4;
}

.up {
  border: 3px solid transparent;
  border-top: 0;
  border-bottom: 4px solid #8a9aa5;
}

.down {
  margin-top: auto;
  border: 3px solid transparent;
  border-bottom: 0;
  border-top: 4px solid #6b9aa2;
}

.thumb {
  width: 8px;
  height: 86px;
  margin-top: 52px;
  border: 1px solid #b5c0cb;
  border-radius: 3px;
  background: #fcfdfe;
}

/* status bar */

.status {
  height: 27px;
  display: flex;
  align-items: center;
  padding: 2px 14px 0 16px;
  font-size: 10px;
  border-top: 2px solid #6c7072;
  border-bottom: 1px solid #b5c4cf;
}

.dot {
  width: 8px;
  height: 8px;
  margin: 0 9px 0 20px;
  border-radius: 50%;
  background: #0b7d10;
}

.find {
  padding-left: 14px;
  border-left: 1px solid #a5b5c0;
  line-height: 18px;
}

.status input[type="text"] {
  width: 99px;
  height: 18px;
  margin: 0 7px 0 2px;
  border: 1px solid #b5c8d4;
  border-radius: 3px;
  background: #fff;
}

.arrow {
  margin-right: 10px;
}

.arrow path {
  fill: #c3cdd5;
  stroke: #a3afb8;
}

.options {
  display: flex;
  align-items: center;
  gap: 9px;
}

.zoom {
  display: flex;
  align-items: center;
  gap: 4px;
  margin-left: auto;
}

.round {
  width: 11px;
  height: 11px;
  margin-left: 4px;
  display: grid;
  place-items: center;
  border: 1px solid #9fb5c5;
  border-radius: 50%;
  background: #e6f0f7;
}

.round path {
  stroke: #3f6f95;
  stroke-width: 2;
}

.zoom input {
  appearance: none;
  width: 86px;
  height: 16px;
  margin: 0;
  background: linear-gradient(#93a2ac, #93a2ac) 0 7px / 100% 1px no-repeat;
}

.zoom input::-webkit-slider-thumb {
  appearance: none;
  width: 9px;
  height: 15px;
  border: 1px solid #5f7f97;
  border-radius: 3px;
  background: linear-gradient(#dbeaf4, #7fa6c2);
}

.view {
  display: grid;
  place-items: center;
  width: 18px;
  height: 20px;
}

.view.current {
  border: 1px solid #a5b0b8;
  background: #f5f8f8;
  margin-left: 7px;
}

.view:last-child {
  width: 14px;
}

/* taskbar */

.taskbar {
  height: 38px;
  display: flex;
  align-items: center;
  justify-content: space-between;
  padding: 0 16px 0 255px;
  font-size: 10px;
  line-height: 13px;
  color: #222;
}

.start-area, .tray, .net {
  display: flex;
  align-items: center;
}

.search {
  display: flex;
  align-items: center;
  gap: 8px;
  width: 181px;
  height: 25px;
  margin: 0 3px 0 12px;
  padding-left: 8px;
  border-radius: 13px;
  background: #fbfbfb;
  box-shadow: 0 1px 1px #d5d5d5;
}

.search input {
  width: 100%;
  padding: 0;
  margin-right: 12px;
  border: 0;
  background: none;
  font: 11px "Open Sans", sans-serif;
}

.search input::placeholder {
  color: #555;
}

.apps {
  display: flex;
  width: 404px;
}

.apps button {
  position: relative;
  flex: 1;
  display: grid;
  place-items: center;
  height: 34px;
}

.apps .front {
  border-left: 3px solid transparent;
  border-right: 3px solid transparent;
  background-clip: padding-box;
}

.badge {
  position: absolute;
  right: 4px;
  top: 2px;
  width: 13px;
  height: 13px;
  border-radius: 50%;
  background: #0a6dbb;
  color: #fff;
}

.running::after {
  content: "";
  position: absolute;
  bottom: 1px;
  width: 6px;
  height: 2px;
  border-radius: 1px;
  background: #858585;
}

.front {
  border-radius: 5px;
  background: #fafafa;
}

.front::after {
  width: 13px;
  background: #0f6cbd;
}

.tray > svg {
  margin-right: 13px;
}

.tray > svg:last-child {
  margin-right: 0;
}

.lang {
  margin: 0 14px 0 2px;
  text-align: center;
}

.net {
  gap: 6px;
}

.clock {
  margin: 0 7px 0 12px;
  text-align: right;
}
```
